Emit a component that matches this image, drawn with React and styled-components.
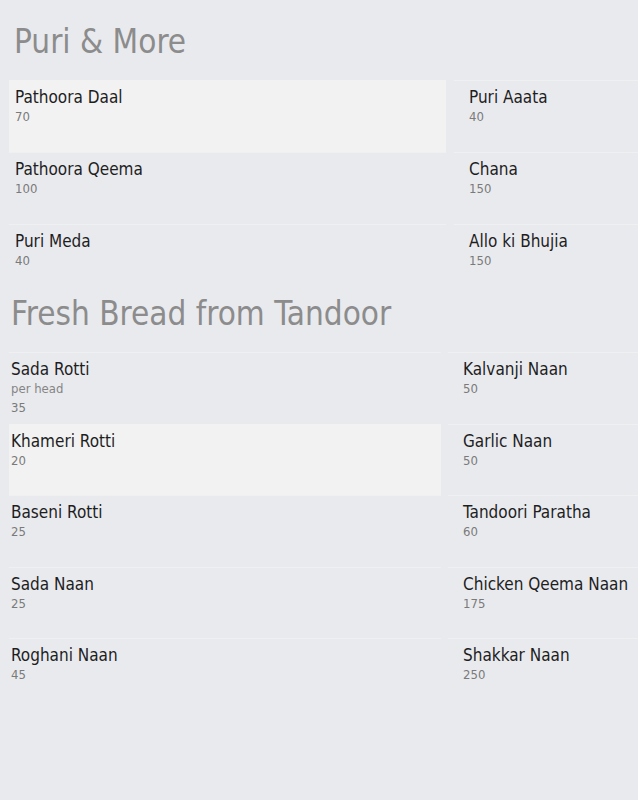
import React from "react";
import styled, { createGlobalStyle } from "styled-components";

const sections = [
  {
    title: "Puri & More",
    titleIndent: 14,
    colWidth: 437,
    gap: 8,
    padLeft: 6,
    padRight: 15,
    rowHeight: 72,
    items: [
      { name: "Pathoora Daal", price: 70, active: true },
      { name: "Puri Aaata", price: 40 },
      { name: "Pathoora Qeema", price: 100 },
      { name: "Chana", price: 150 },
      { name: "Puri Meda", price: 40 },
      { name: "Allo ki Bhujia", price: 150 },
    ],
  },
  {
    title: "Fresh Bread from Tandoor",
    titleIndent: 11,
    colWidth: 432,
    gap: 7,
    padLeft: 2,
    padRight: 15,
    rowHeight: 71.5,
    items: [
      { name: "Sada Rotti", note: "per head", price: 35 },
      { name: "Kalvanji Naan", price: 50 },
      { name: "Khameri Rotti", price: 20, active: true },
      { name: "Garlic Naan", price: 50 },
      { name: "Baseni Rotti", price: 25 },
      { name: "Tandoori Paratha", price: 60 },
      { name: "Sada Naan", price: 25 },
      { name: "Chicken Qeema Naan", price: 175 },
      { name: "Roghani Naan", price: 45 },
      { name: "Shakkar Naan", price: 250 },
    ],
  },
];

/**
 * Menu page with two category sections
 */
export default function App() {
  return (
    <>
      <GlobalStyle />
      <Page>
        {sections.map((section) => (
          <Section key={section.title}>
            <Heading $indent={section.titleIndent}>{section.title}</Heading>
            <Grid $col={section.colWidth} $gap={section.gap} $row={section.rowHeight}>
              {section.items.map((item, index) => (
                <Item
                  key={item.name}
                  $active={item.active}
                  $pad={index % 2 === 0 ? section.padLeft : section.padRight}
                >
                  <Name>{item.name}</Name>
                  {item.note && <Note>{item.note}</Note>}
                  <Price>{item.price}</Price>
                </Item>
              ))}
            </Grid>
          </Section>
        ))}
      </Page>
    </>
  );
}

const GlobalStyle = createGlobalStyle`
  html, body {
    margin: 0;
    padding: 0;
    background: #e9eaee;
    overflow: hidden;
  }
`;

const Page = styled.div`
  width: 638px;
  height: 800px;
  overflow: hidden;
  background: #e9eaee;
  font-family: "DejaVu Sans Condensed", "DejaVu Sans", sans-serif;
  padding-top: 24px;
  box-sizing: border-box;
`;

const Section = styled.section`
  padding-left: 9px;
`;

const Heading = styled.h2`
  margin: 0 0 20px;
  padding-left: ${(p) => p.$indent - 9}px;
  font-size: 33px;
  font-weight: normal;
  line-height: 36px;
  color: #8c8c8c;
`;

const Grid = styled.div`
  display: grid;
  grid-template-columns: ${(p) => p.$col}px ${(p) => p.$col}px;
  grid-auto-rows: ${(p) => p.$row}px;
  column-gap: ${(p) => p.$gap}px;
`;

const Item = styled.div`
  display: flex;
  flex-direction: column;
  padding: 6px 0 0 ${(p) => p.$pad}px;
  background: ${(p) => (p.$active ? "#f2f2f2" : "transparent")};
  border-top: 1px solid ${(p) => (p.$active ? "#f2f2f2" : "#eff0f2")};
  box-sizing: border-box;
`;

const Name = styled.div`
  font-size: 17px;
  line-height: 20px;
  color: #1e1e1e;
`;

const Note = styled.div`
  font-size: 13px;
  line-height: 19px;
  color: #858585;
`;

const Price = styled.div`
  font-size: 13px;
  line-height: 19px;
  color: #7a7a7a;
`;
